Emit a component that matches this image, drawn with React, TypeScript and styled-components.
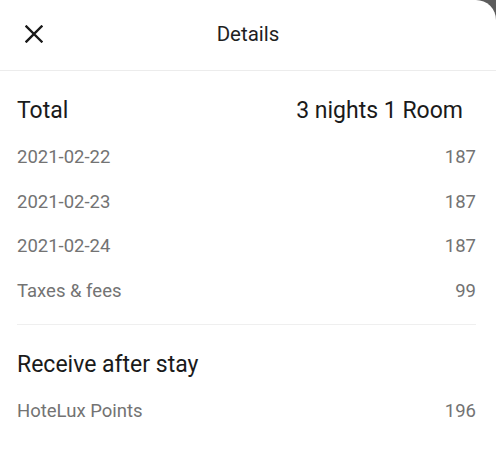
import React from "react";
import styled, { createGlobalStyle } from "styled-components";

const Global = createGlobalStyle`
  html, body { margin: 0; padding: 0; background: #5c5c5c; }
  body { font-family: Roboto, "Noto Sans", Arial, sans-serif; }
  * { box-sizing: border-box; }
`;

const Sheet = styled.div`
  width: 496px;
  height: 460px;
  background: #fff;
  border-radius: 0 20px 0 0;
  overflow: hidden;
`;

const Header = styled.header`
  height: 71px;
  display: grid;
  grid-template-columns: 1fr auto 1fr;
  align-items: center;
  padding-bottom: 3px;
  border-bottom: 1px solid #ececec;
`;

const CloseButton = styled.button`
  justify-self: start;
  margin-left: 23px;
  width: 21px;
  height: 21px;
  padding: 0;
  border: 0;
  background: none;
  display: flex;
  align-items: center;
  justify-content: center;
  color: #1a1a1a;
`;

const Title = styled.h1`
  margin: 0;
  font-size: 20.5px;
  font-weight: 400;
  color: #1f1f1f;
`;

const Section = styled.section<{ $top: number; $bottom: number }>`
  padding: ${(p) => p.$top}px 20px ${(p) => p.$bottom}px 17px;
  display: flex;
  flex-direction: column;
`;

const Row = styled.div<{ $h: number }>`
  height: ${(p) => p.$h}px;
  display: flex;
  align-items: center;
  justify-content: space-between;
`;

const Heading = styled.span`
  font-size: 23px;
  color: #1a1a1a;
`;

const HeadingValue = styled(Heading)`
  margin-right: 13px;
`;

const Label = styled.span`
  font-size: 18.5px;
  color: #737373;
`;

const Divider = styled.hr`
  margin: 0 20px 0 17px;
  border: 0;
  border-top: 1px solid #efefef;
`;

const lines = [
  { label: "2021-02-22", value: "187" },
  { label: "2021-02-23", value: "187" },
  { label: "2021-02-24", value: "187" },
  { label: "Taxes & fees", value: "99" },
];

export default function App() {
  return (
    <>
      <Global />
      <Sheet>
        <Header>
          <CloseButton aria-label="Close">
            <svg width="18" height="18" viewBox="0 0 18 18">
              <path d="M1.5 1.5 L16.5 16.5 M16.5 1.5 L1.5 16.5" stroke="currentColor" strokeWidth="2.4" strokeLinecap="square" fill="none" />
            </svg>
          </CloseButton>
          <Title>Details</Title>
          <span />
        </Header>
        <Section $top={15} $bottom={11}>
          <Row $h={49}>
            <Heading>Total</Heading>
            <HeadingValue>3 nights 1 Room</HeadingValue>
          </Row>
          {lines.map((l) => (
            <Row $h={44.5} key={l.label}>
              <Label>{l.label}</Label>
              <Label>{l.value}</Label>
            </Row>
          ))}
        </Section>
        <Divider />
        <Section $top={16} $bottom={0}>
          <Row $h={46}>
            <Heading>Receive after stay</Heading>
          </Row>
          <Row $h={47}>
            <Label>HoteLux Points</Label>
            <Label>196</Label>
          </Row>
        </Section>
      </Sheet>
    </>
  );
}
